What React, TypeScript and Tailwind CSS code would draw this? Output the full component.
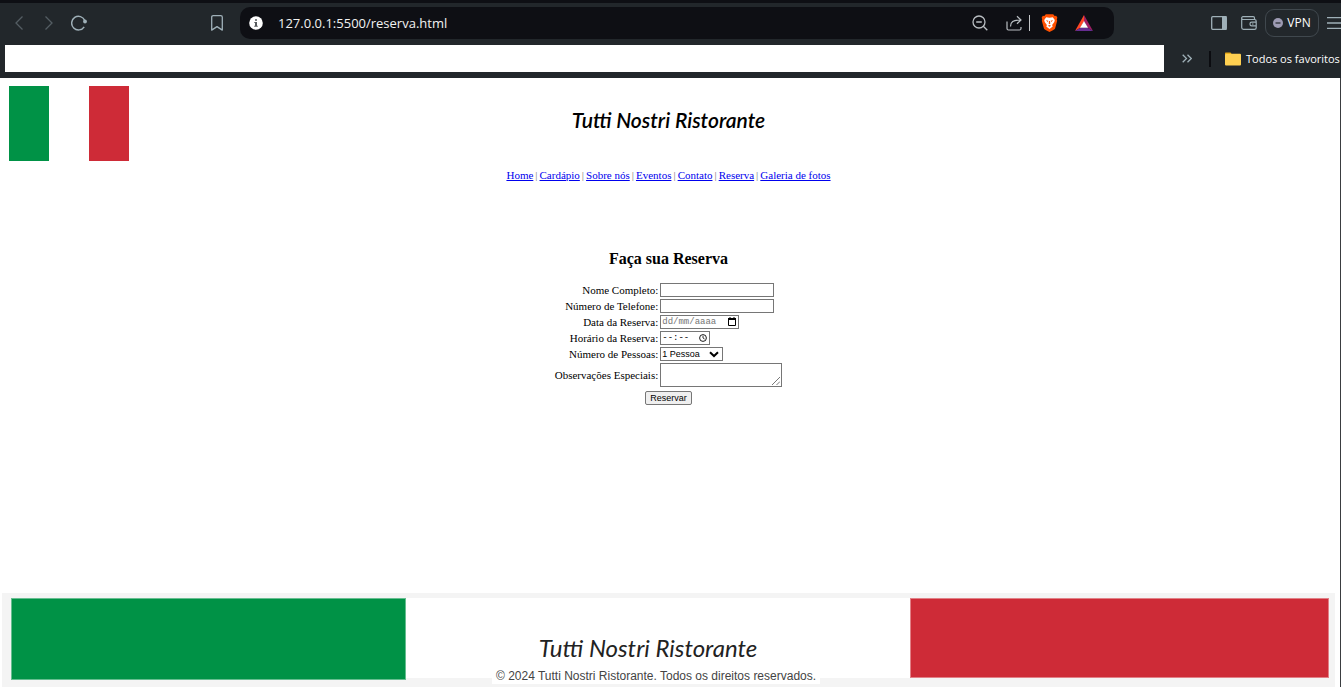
import { Fragment, useState } from "react";
import type { ReactNode } from "react";

const links = ["Home", "Cardápio", "Sobre nós", "Eventos", "Contato", "Reserva", "Galeria de fotos"];

const field = "h-3.5 border border-[#767676] bg-white px-px outline-none";

function BrowserBar() {
  const [url, setUrl] = useState("127.0.0.1:5500/reserva.html");
  return (
    <header className="overflow-hidden border-t-[3px] border-[#0e0f14] bg-[#22272b] font-['Open_Sans','Noto_Sans',sans-serif] text-[#9fb0b8]">
      <div className="flex h-10 items-center">
        <div className="flex items-center gap-3.5 pl-[11px]">
          <button aria-label="Voltar" className="text-[#545d63]">
            <svg width="16" height="18" viewBox="0 0 16 18" fill="none" stroke="currentColor" strokeWidth="1.3"><path d="M11.500 2.500 5 9l6.500 6.500" /></svg>
          </button>
          <button aria-label="Avançar" className="text-[#545d63]">
            <svg width="16" height="18" viewBox="0 0 16 18" fill="none" stroke="currentColor" strokeWidth="1.3"><path d="M4.500 2.500 11 9l-6.500 6.500" /></svg>
          </button>
          <button aria-label="Recarregar">
            <svg width="18" height="18" viewBox="0 0 18 18" fill="none" stroke="currentColor" strokeWidth="1.5"><path d="M13.200 12.800a6.800 6.800 0 1 1 .6-6.200" /><circle cx="14" cy="7.500" r="1.900" fill="currentColor" stroke="none" /></svg>
          </button>
        </div>
        <button aria-label="Favoritar" className="ml-[121px]">
          <svg width="14" height="18" viewBox="0 0 14 18" fill="none" stroke="currentColor" strokeWidth="1.3" strokeLinejoin="round"><path d="M1.700 3.200c0-1 .5-1.500 1.500-1.500h7.600c1 0 1.500.5 1.500 1.500v12.900L7 12.600l-5.300 3.500z" /></svg>
        </button>
        <div className="ml-4 mr-[97px] flex h-8 min-w-0 flex-1 items-center rounded-[10px] bg-[#0e0f14] pl-[9px] pr-5">
          <svg width="14" height="14" viewBox="0 0 14 14"><circle cx="7" cy="7" r="6.800" fill="#fff" /><path d="M6 3.200h2v1.600H6zM5.300 6H8v3.800h.8v1H5.200v-1H6V7h-.7z" fill="#55595c" /></svg>
          <input aria-label="Endereço" value={url} onChange={(e) => setUrl(e.target.value)} className="ml-[15px] min-w-0 flex-1 bg-transparent text-[13px] text-[#f2f2f2] outline-none" />
          <button aria-label="Zoom">
            <svg width="18" height="18" viewBox="0 0 18 18" fill="none" stroke="#b9bec2" strokeWidth="1.3"><circle cx="8" cy="8" r="6" /><path d="m12.300 12.300 4 4M5.200 8h5.600" /></svg>
          </button>
          <button aria-label="Compartilhar" className="ml-4">
            <svg width="18" height="18" viewBox="0 0 18 18" fill="none" stroke="#b9bec2" strokeWidth="1.2"><path d="M2 7.500v7c0 1 .5 1.500 1.500 1.500h11c1 0 1.500-.5 1.500-1.500V13M5.500 12.500C5.500 8 8 6 15.500 6M12 2.200 16 6l-4 3.800" /></svg>
          </button>
          <div className="ml-1.5 h-4 w-px bg-[#c4c6c8]" />
          <button aria-label="Brave Shields" className="ml-[11px]">
            <svg width="17" height="18" viewBox="0 0 17 18"><path d="M4.800.3h7.400l1.500 1.600 1.500-.2 1.200 2-.6 1.500.4 1.600-2 7.200c-.3 1-1 1.500-1.800 2L8.500 17.900 4.600 16c-.8-.5-1.500-1-1.800-2L.8 6.800l.4-1.600-.6-1.500 1.200-2 1.500.2z" fill="#ff5000" /><path d="m5.200 3.300 3.300.5 3.300-.5 2 2.600-.5 2-2.200 3 .6 1.600-3.200 2.600-3.200-2.600.6-1.600-2.200-3-.5-2z" fill="#fff" /><path d="m4.800 6.200 2.500.6-.4 1.100zM12.200 6.200l-2.500.6.4 1.100zM8 7h1l.3 2.500-.8.800-.8-.8zM6.900 11.700l1.600-.7 1.600.7-1.600 1z" fill="#ff5000" /></svg>
          </button>
          <button aria-label="Recompensas" className="ml-4">
            <svg width="20" height="18" viewBox="0 0 20 18"><path d="M10 1 1 17l5.300-3.200L10 7.300z" fill="#ff4724" /><path d="m10 1 9 16-5.300-3.200L10 7.300z" fill="#9e1f63" /><path d="M1 17h18l-5.300-3.200H6.300z" fill="#662d91" /><path d="m10 7 4 6.800H6z" fill="#fff" /></svg>
          </button>
        </div>
        <div className="flex shrink-0 items-center">
          <button aria-label="Barra lateral">
            <svg width="16" height="14" viewBox="0 0 16 14"><rect x=".7" y=".7" width="14.600" height="12.600" rx="1" fill="none" stroke="currentColor" strokeWidth="1.300" /><path d="M11 0h4.500v14H11z" fill="currentColor" /></svg>
          </button>
          <button aria-label="Carteira" className="ml-3.5">
            <svg width="16" height="14" viewBox="0 0 16 14" fill="none" stroke="currentColor" strokeWidth="1.200"><path d="M13.500 3.500V2c0-.8-.5-1.300-1.300-1.300H2C1.200.7.7 1.200.7 2v9.500c0 1.200.7 1.800 1.800 1.800h11c1 0 1.700-.6 1.700-1.600V5.300c0-1.100-.7-1.800-1.700-1.800H2.200C1.300 3.500.7 3 .7 2M15.200 6.200h-4.500c-1 0-1.700.7-1.700 1.600v.5c0 1 .7 1.600 1.700 1.600h4.500M11 8h1.500" /></svg>
          </button>
          <button className="ml-2 flex h-7 w-[54px] items-center justify-center gap-1 rounded-[9px] border border-[#40484e] text-xs text-white">
            <svg width="10" height="10" viewBox="0 0 10 10"><circle cx="5" cy="5" r="5" fill="#9d9bb3" /><path d="M2.500 4.400h5v1.200h-5z" fill="#22272b" /></svg>
            VPN
          </button>
          <button aria-label="Menu" className="ml-2">
            <svg width="14" height="14" viewBox="0 0 14 14" stroke="currentColor" strokeWidth="1.300"><path d="M0 1.700h14M0 7h14M0 12.300h14" /></svg>
          </button>
        </div>
      </div>
      <div className="flex h-[35px] items-start pl-[5px] pt-0.5">
        <div className="h-[27px] flex-1 bg-white" />
        <div className="flex h-[27px] w-[177px] shrink-0 items-center whitespace-nowrap text-[11px] text-white">
          <button aria-label="Mais favoritos" className="ml-[18px] shrink-0 text-[#9fb0b8]">
            <svg width="10" height="9" viewBox="0 0 10 9" fill="none" stroke="currentColor" strokeWidth="1.300"><path d="m.7.700 3.800 3.800L.7 8.300M5.500.7l3.800 3.800-3.800 3.800" /></svg>
          </button>
          <div className="ml-[17px] h-4 w-0.5 shrink-0 bg-[#0b0c10]" />
          <button className="ml-3.5 flex shrink-0 items-center gap-[5px]">
            <svg width="16" height="14" viewBox="0 0 16 14"><path d="M0 1.500C0 .7.400.4 1 .4h4.500L7 2.500H0z" fill="#e5a50e" /><rect y="1.800" width="16" height="11.700" rx="1" fill="#ffd051" /></svg>
            Todos os favoritos
          </button>
        </div>
      </div>
    </header>
  );
}

function Row({ id, label, children }: { id: string; label: string; children: ReactNode }) {
  return (
    <>
      <label htmlFor={id} className="text-right">{label}</label>
      <div className="flex">{children}</div>
    </>
  );
}

export default function App() {
  return (
    <div className="flex min-h-screen flex-col overflow-x-hidden bg-white font-['Liberation_Serif',serif] text-[11px] leading-3 text-black">
      <BrowserBar />
      <div className="flex flex-1 flex-col border-r border-[#3a3d40] pr-[3px]">
        <div className="relative flex flex-col items-center pt-7">
          <div aria-label="Bandeira da Itália" role="img" className="absolute left-[9px] top-2 flex h-[75px] w-[120px]">
            <div className="flex-1 bg-[#009246]" />
            <div className="flex-1 bg-white" />
            <div className="flex-1 bg-[#ce2b37]" />
          </div>
          <h1 className="font-['Segoe_Script',Lato,cursive] text-[21px] font-semibold italic leading-7">Tutti Nostri Ristorante</h1>
          <nav className="mt-[35px] flex gap-0.5 whitespace-nowrap text-[#777]">
            {links.map((name, i) => (
              <Fragment key={name}>
                {i > 0 && <span>|</span>}
                <a href="#" className="text-[#0000ee] underline">{name}</a>
              </Fragment>
            ))}
          </nav>
        </div>

        <main className="flex flex-1 flex-col items-center">
          <h2 className="mt-[68px] text-base font-bold leading-5">Faça sua Reserva</h2>
          <form onSubmit={(e) => e.preventDefault()} className="mt-3.5 flex flex-col items-center gap-1">
            <div className="grid grid-cols-[auto_122px] items-center gap-0.5">
              <Row id="nome" label="Nome Completo:">
                <input id="nome" type="text" className={`${field} w-[114px]`} />
              </Row>
              <Row id="telefone" label="Número de Telefone:">
                <input id="telefone" type="tel" className={`${field} w-[114px]`} />
              </Row>
              <Row id="data" label="Data da Reserva:">
                <div className="relative flex">
                  <input id="data" type="text" placeholder="dd/mm/aaaa" className={`${field} w-[79px] font-['Liberation_Mono',monospace] text-[9px] placeholder:text-[#757575]`} />
                  <svg className="absolute right-[3px] top-0.5" width="8" height="9" viewBox="0 0 8 9"><path d="M.5 1.500h7v7h-7z" fill="none" stroke="#000" /><path d="M0 1h8v2H0zM1.500 0h1v1h-1zM5.500 0h1v1h-1z" /></svg>
                </div>
              </Row>
              <Row id="hora" label="Horário da Reserva:">
                <div className="relative flex">
                  <input id="hora" type="text" placeholder="--:--" className={`${field} w-[50px] font-['Liberation_Mono',monospace] text-[9px] placeholder:text-black`} />
                  <svg className="absolute right-[3px] top-[3px]" width="8" height="8" viewBox="0 0 8 8" fill="none" stroke="#000"><circle cx="4" cy="4" r="3.400" strokeWidth=".9" /><path d="M4 1.800V4l1.600 1" strokeWidth=".8" /></svg>
                </div>
              </Row>
              <Row id="pessoas" label="Número de Pessoas:">
                <div className="relative flex">
                  <select id="pessoas" className={`${field} w-[63px] appearance-none font-['Liberation_Sans',sans-serif] text-[9px] leading-3`}>
                    <option>1 Pessoa</option>
                    <option>2 Pessoas</option>
                    <option>3 Pessoas</option>
                    <option>4 Pessoas</option>
                  </select>
                  <svg className="pointer-events-none absolute right-1 top-1" width="10" height="7" viewBox="0 0 10 7" fill="none" stroke="#000" strokeWidth="2"><path d="m1 1.200 4 3.800 4-3.800" /></svg>
                </div>
              </Row>
              <Row id="obs" label="Observações Especiais:">
                <div className="relative flex">
                  <textarea id="obs" className="h-6 w-[122px] resize-none border border-[#767676] bg-white px-0.5 outline-none" />
                  <svg className="pointer-events-none absolute bottom-0.5 right-0.5" width="8" height="8" viewBox="0 0 8 8" stroke="#555" strokeWidth=".8"><path d="M0 8 8 0M4.500 8 8 4.500" /></svg>
                </div>
              </Row>
            </div>
            <button type="submit" className="h-3.5 w-[47px] rounded-xs border border-[#767676] bg-[#efefef] font-['Liberation_Sans',sans-serif] text-[9px] leading-3">Reservar</button>
          </form>
        </main>

        <footer className="mx-0.5 flex h-[94px] bg-[#f4f4f4] pb-[7px] pl-[9px] pr-1.5 pt-[5px]">
          <div className="grow-[394] basis-0 border border-[#66be90] bg-[#009246]" />
          <div className="mb-0.5 flex grow-[504] basis-0 flex-col items-center justify-end bg-white">
            <p className="mr-5 whitespace-nowrap font-['Segoe_Script',Lato,cursive] text-2xl italic leading-7 text-[#222]">Tutti Nostri Ristorante</p>
            <p className="-mb-1.5 mr-1 mt-1.5 whitespace-nowrap bg-white px-1 font-['Liberation_Sans',sans-serif] text-[12px] leading-4 text-[#444]">© 2024 Tutti Nostri Ristorante. Todos os direitos reservados.</p>
          </div>
          <div className="mb-0.5 grow-[418] basis-0 border border-[#e28087] bg-[#ce2b37]" />
        </footer>
      </div>
    </div>
  );
}
